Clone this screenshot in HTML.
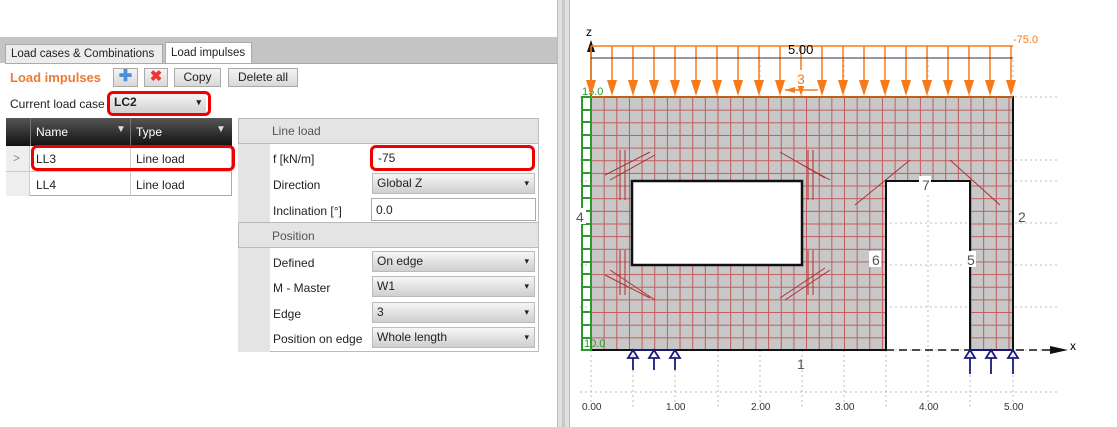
<!DOCTYPE html>
<html><head><meta charset="utf-8"><style>
*{box-sizing:border-box;margin:0;padding:0}
body{width:1117px;height:427px;overflow:hidden;background:#fff;font-family:"Liberation Sans",sans-serif;font-size:12px;color:#222;position:relative}
.a{position:absolute;white-space:nowrap}
.btn{position:absolute;height:19px;border:1px solid #aaa;background:linear-gradient(#f4f4f4,#d8d8d8);font-size:12px;text-align:center;line-height:17px}
.dd{position:absolute;height:21px;border:1px solid #bbb;background:linear-gradient(#f6f6f6,#cfcfcf);padding-left:4px;line-height:19px;font-size:12px}
.dd:after{content:"▾";position:absolute;right:5px;top:0;font-size:9px}
.red{position:absolute;border:3px solid #e00;border-radius:6px}
.lbl{position:absolute;left:273px;font-size:12px}
</style></head><body>
<div class="a" style="left:0;top:37px;width:557px;height:26px;background:#c4c4c4"></div>
<div class="a" style="left:5px;top:44px;width:158px;height:20px;background:#ececec;border:1px solid #aaa;padding:3px 5px;font-size:11.5px;overflow:hidden">Load cases &amp; Combinations</div>
<div class="a" style="left:165px;top:42px;width:87px;height:22px;background:#fff;border:1px solid #aaa;border-bottom:none;padding:4px 5px;font-size:11.5px;overflow:hidden">Load impulses</div>
<div class="a" style="left:5px;top:63px;width:552px;height:1px;background:#aaa"></div>
<div class="a" style="left:10px;top:70px;color:#f07a30;font-weight:bold;font-size:13px">Load impulses</div>
<div class="btn" style="left:113px;top:68px;width:25px;color:#4a90d9;font-weight:bold;font-size:16px;line-height:16px">✚</div>
<div class="btn" style="left:144px;top:68px;width:24px;color:#e33;font-weight:bold;font-size:15px;line-height:16px">✖</div>
<div class="btn" style="left:174px;top:68px;width:47px">Copy</div>
<div class="btn" style="left:228px;top:68px;width:70px">Delete all</div>
<div class="a" style="left:10px;top:97px">Current load case</div>
<div class="dd" style="left:110px;top:93px;width:96px;font-weight:bold;border:none;background:linear-gradient(#f6f6f6,#cfcfcf)">LC2</div>
<div class="red" style="left:107px;top:91px;width:104px;height:25px"></div>
<div class="a" style="left:6px;top:118px;width:226px;height:28px;background:linear-gradient(#555,#111)"></div>
<div class="a" style="left:30px;top:118px;width:1px;height:28px;background:#777"></div>
<div class="a" style="left:130px;top:118px;width:1px;height:28px;background:#777"></div>
<div class="a" style="left:36px;top:125px;color:#fff">Name</div>
<div class="a" style="left:116px;top:124px;color:#ddd;font-size:10px">▼</div>
<div class="a" style="left:136px;top:125px;color:#fff">Type</div>
<div class="a" style="left:216px;top:124px;color:#ddd;font-size:10px">▼</div>
<div class="a" style="left:6px;top:146px;width:226px;height:50px;border:1px solid #aaa;border-top:none"></div>
<div class="a" style="left:6px;top:146px;width:24px;height:50px;background:#eee;border-right:1px solid #ccc"></div>
<div class="a" style="left:6px;top:171px;width:226px;height:1px;background:#ccc"></div>
<div class="a" style="left:130px;top:146px;width:1px;height:50px;background:#ccc"></div>
<div class="a" style="left:13px;top:151px;color:#888">&gt;</div>
<div class="a" style="left:36px;top:152px">LL3</div><div class="a" style="left:136px;top:152px">Line load</div>
<div class="a" style="left:36px;top:178px">LL4</div><div class="a" style="left:136px;top:178px">Line load</div>
<div class="red" style="left:31px;top:145px;width:204px;height:26px"></div>
<div class="a" style="left:238px;top:118px;width:301px;height:234px;border:1px solid #bbb;background:#fff"></div>
<div class="a" style="left:238px;top:118px;width:32px;height:234px;background:#e4e4e4"></div>
<div class="a" style="left:238px;top:118px;width:301px;height:26px;background:#e4e4e4;border:1px solid #bbb"></div>
<div class="a" style="left:272px;top:124px;color:#555">Line load</div>
<div class="a" style="left:238px;top:222px;width:301px;height:26px;background:#e4e4e4;border:1px solid #bbb"></div>
<div class="a" style="left:272px;top:229px;color:#555">Position</div>
<div class="lbl" style="top:152px">f [kN/m]</div>
<div class="a" style="left:370px;top:145px;width:165px;height:26px;border:3px solid #e00;border-radius:6px;padding:3px 5px">-75</div>
<div class="lbl" style="top:178px">Direction</div>
<div class="dd" style="left:372px;top:173px;width:163px">Global Z</div>
<div class="lbl" style="top:204px">Inclination [°]</div>
<div class="a" style="left:371px;top:198px;width:165px;height:23px;border:1px solid #aaa;padding:4px 4px">0.0</div>
<div class="lbl" style="top:256px">Defined</div>
<div class="dd" style="left:372px;top:251px;width:163px">On edge</div>
<div class="lbl" style="top:281px">M - Master</div>
<div class="dd" style="left:372px;top:276px;width:163px">W1</div>
<div class="lbl" style="top:307px">Edge</div>
<div class="dd" style="left:372px;top:302px;width:163px">3</div>
<div class="lbl" style="top:332px">Position on edge</div>
<div class="dd" style="left:372px;top:327px;width:163px">Whole length</div>
<div class="a" style="left:557px;top:0;width:13px;height:427px;background:#e0e0e0;border-left:1px solid #bbb;border-right:1px solid #bbb"></div>
<div class="a" style="left:562px;top:0;width:3px;height:427px;background:#c8c8c8"></div>
<svg class="a" style="left:0;top:0" width="1117" height="427" viewBox="0 0 1117 427">
<defs>
<pattern id="g" x="591" y="97" width="12.65" height="12.65" patternUnits="userSpaceOnUse">
<path d="M0.5 0V12.65M0 0.5H12.65" stroke="#c04848" stroke-width="1"/></pattern>
</defs>
<g stroke="#bbb" stroke-dasharray="2 3" stroke-width="1">
<path d="M580 97H1060M580 181H1060M580 265H1060M580 350H1060M580 160H1060M580 223H1060M580 307H1060M580 392H1060"/>
<path d="M591 60V410M675 60V410M760 60V410M844 60V410M928 60V410M1013 60V410M633 90V410M718 90V410M802 90V410M886 90V410M970 90V410"/>
</g>
<path d="M591 97H1013V350H970V181H886V350H591Z M632 181H802V265H632Z" fill="#c8c8c8" fill-rule="evenodd"/>
<path d="M591 97H1013V350H970V181H886V350H591Z M632 181H802V265H632Z" fill="url(#g)" fill-rule="evenodd" opacity=".85"/>
<g stroke="#b03030" stroke-width="1" fill="none">
<path d="M605 175L650 152M610 180L655 155M605 275L650 298M610 270L655 300M785 155L830 180M780 152L825 178M785 300L830 270M780 298L825 268M855 205L910 160M1000 205L950 160M620 150V200M625 150V200M808 150V200M813 150V200M620 250V295M625 250V295M808 250V295M813 250V295"/>
</g>
<path d="M591 97H1013V350H970V181H886V350H591Z" fill="none" stroke="#111" stroke-width="2"/>
<rect x="632" y="181" width="170" height="84" fill="#fff" stroke="#111" stroke-width="2.5"/>
<path d="M886 350H1060" stroke="#111" stroke-dasharray="8 5" stroke-width="1.5"/>
<path d="M1050 346L1068 350L1050 354Z" fill="#111"/>
<text x="1070" y="350" font-size="12" font-family="Liberation Sans">x</text>
<text x="586" y="36" font-size="12" font-family="Liberation Sans">z</text>
<path d="M591 42V97" stroke="#222" stroke-width="1.5"/>
<path d="M587 52L591 40L595 52Z" fill="#111"/>
<g stroke="#2a9a2a" stroke-width="2" fill="none">
<rect x="582" y="97" width="9" height="253"/>
<path d="M582 110H591M582 122H591M582 135H591M582 148H591M582 160H591M582 173H591M582 186H591M582 198H591M582 211H591M582 224H591M582 236H591M582 249H591M582 262H591M582 274H591M582 287H591M582 300H591M582 312H591M582 325H591M582 338H591"/>
</g>
<text x="582" y="95" fill="#2a9a2a" font-size="11" font-family="Liberation Sans">15.0</text>
<text x="584" y="347" fill="#2a9a2a" font-size="11" font-family="Liberation Sans">10.0</text>
<g stroke="#f77a1a" stroke-width="1.5" fill="none">
<path d="M591 46H1013M591 97H1013"/>
<path d="M591 46V83M612 46V83M633 46V83M654 46V83M675 46V83M696 46V83M717 46V83M738 46V83M759 46V83M780 46V83M801 46V83M822 46V83M843 46V83M864 46V83M885 46V83M906 46V83M927 46V83M948 46V83M969 46V83M990 46V83M1011 46V83"/>
</g>
<g fill="#f77a1a">
<path d="M586 80h10l-5 16z M607 80h10l-5 16z M628 80h10l-5 16z M649 80h10l-5 16z M670 80h10l-5 16z M691 80h10l-5 16z M712 80h10l-5 16z M733 80h10l-5 16z M754 80h10l-5 16z M775 80h10l-5 16z M796 80h10l-5 16z M817 80h10l-5 16z M838 80h10l-5 16z M859 80h10l-5 16z M880 80h10l-5 16z M901 80h10l-5 16z M922 80h10l-5 16z M943 80h10l-5 16z M964 80h10l-5 16z M985 80h10l-5 16z M1006 80h10l-5 16z"/>
</g>
<path d="M591 58H1013" stroke="#333" stroke-width="1"/>
<text x="788" y="54" font-size="13" font-family="Liberation Sans">5.00</text>
<rect x="794" y="70" width="14" height="16" fill="#fff"/>
<text x="797" y="84" fill="#f77a1a" font-size="14" font-family="Liberation Sans">3</text>
<path d="M785 90H818" stroke="#f77a1a" stroke-width="1.5"/><path d="M785 90l10-3v6z" fill="#f77a1a"/>
<text x="1013" y="43" fill="#f77a1a" font-size="11" font-family="Liberation Sans">-75.0</text>
<g stroke="#1a1a7a" stroke-width="1.8" fill="none">
<path d="M633 350H675"/><path d="M970 350H1013"/>
<path d="M633 350l-5 8h10z M654 350l-5 8h10z M675 350l-5 8h10z M970 350l-5 8h10z M991 350l-5 8h10z M1013 350l-5 8h10z"/>
<path d="M633 358V370M654 358V370M675 358V370M970 358V374M991 358V374M1013 358V374"/>
</g>
<g fill="#fff"><rect x="574" y="208" width="12" height="16"/><rect x="869" y="251" width="12" height="16"/><rect x="964" y="251" width="12" height="16"/><rect x="919" y="176" width="12" height="16"/></g>
<g font-family="Liberation Sans" fill="#555" font-size="14">
<text x="797" y="369">1</text><text x="1018" y="222">2</text><text x="576" y="222">4</text>
<text x="872" y="265">6</text><text x="967" y="265">5</text><text x="922" y="190">7</text>
</g>
<g font-family="Liberation Sans" font-size="10" fill="#333">
<text x="582" y="410">0.00</text><text x="666" y="410">1.00</text><text x="751" y="410">2.00</text><text x="835" y="410">3.00</text><text x="919" y="410">4.00</text><text x="1004" y="410">5.00</text>
</g>
</svg>
</body></html>
